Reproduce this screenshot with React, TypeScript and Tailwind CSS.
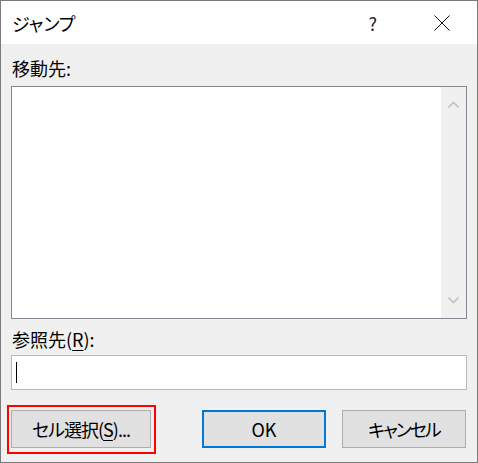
import React from 'react';

const font = "font-['Noto_Sans_CJK_JP',sans-serif] [font-feature-settings:'palt']";

const Chevron: React.FC<{ down?: boolean }> = ({ down }) => (
  <svg width="11" height="7" viewBox="0 0 11 7" className={down ? 'rotate-180' : ''}>
    <path d="M0.5 6.5 L5.5 1.5 L10.5 6.5" fill="none" stroke="#c2c2c2" strokeWidth="1.6" />
  </svg>
);

const App: React.FC = () => {
  return (
    <div className={`w-[478px] h-[463px] border border-[#7a7a7a] bg-[#f0f0f0] flex flex-col text-black ${font}`}>
      {/* title bar */}
      <div className="h-[43px] bg-white flex items-center pl-[11px]">
        <span className="text-[18px] leading-none">ジャンプ</span>
        <span className="ml-auto text-[18px] leading-none text-[#222]">?</span>
        <svg width="16" height="16" viewBox="0 0 16 16" className="ml-[57px] mr-[27px]">
          <path d="M0.5 0.5 L15.5 15.5 M15.5 0.5 L0.5 15.5" stroke="#111" strokeWidth="1" />
        </svg>
      </div>

      <div className="flex flex-col px-[10px]">
        <div className="mt-[12px] h-[24px] text-[18px] leading-[24px] pl-[1px]">移動先:</div>

        {/* list box */}
        <div className="mt-[6px] h-[233px] border border-[#828790] bg-white flex">
          <div className="flex-1" />
          <div className="w-[25px] bg-[#f0f0f0] flex flex-col items-center justify-between py-[14px]">
            <Chevron />
            <Chevron down />
          </div>
        </div>

        <div className="mt-[8px] h-[24px] text-[18px] leading-[24px] pl-[1px]">
          参照先(<span className="underline underline-offset-[3px]">R</span>):
        </div>

        {/* reference input */}
        <div className="mt-[4px] h-[35px] border border-[#b9b9b9] bg-white flex items-center pl-[4px]">
          <div className="w-px h-[21px] bg-black" />
        </div>

        {/* buttons */}
        <div className="mt-[20px] flex items-center">
          <div className="relative">
            <button className="w-[140px] h-[38px] bg-[#e1e1e1] border border-[#adadad] text-[18px] leading-none tracking-[-1px]">
              セル選択(<span className="underline underline-offset-[3px]">S</span>)...
            </button>
            <div className="absolute -left-[4px] -top-[5px] w-[149px] h-[49px] border-2 border-[#ff0000] pointer-events-none" />
          </div>
          <button className="ml-[51px] w-[124px] h-[38px] bg-[#e1e1e1] border-2 border-[#0078d7] text-[18px] leading-none">
            OK
          </button>
          <button className="ml-[16px] w-[124px] h-[38px] bg-[#e1e1e1] border border-[#adadad] text-[18px] leading-none tracking-[-2px]">
            キャンセル
          </button>
        </div>
      </div>
    </div>
  );
};

export default App;
